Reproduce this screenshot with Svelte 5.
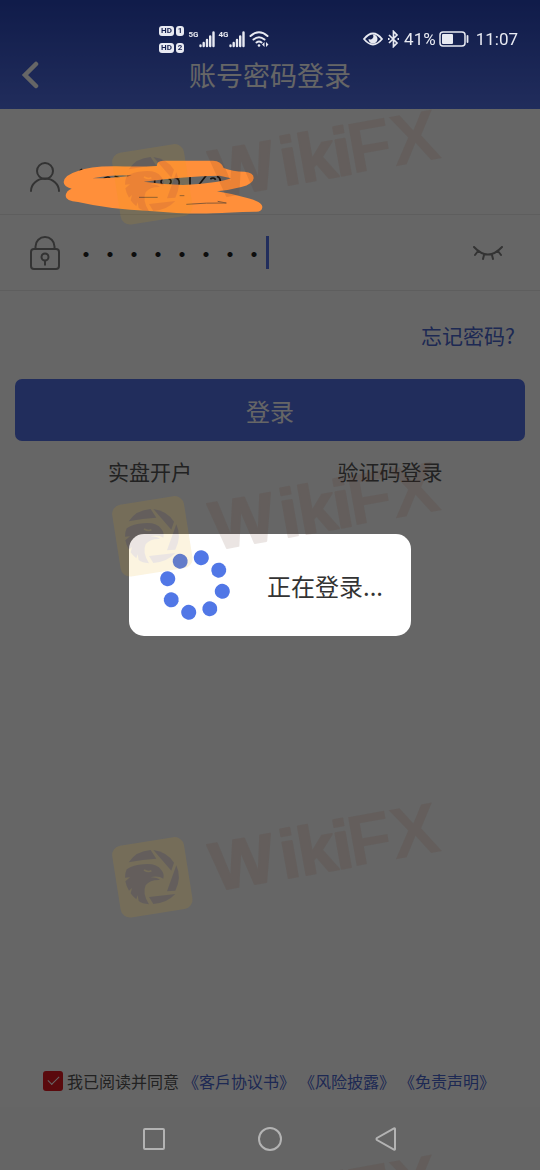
<script lang="ts">
  let account = $state('');
  let password = $state('abcd1234');
  let agreed = $state(true);

  const agreements = ['《客戶协议书》', '《风险披露》', '《免责声明》'];
  const spinnerDots = [-77, -32, 13, 58, 103, 148, 193, 238];
  const watermarks = [0, 1, 2, 3];
</script>

{#snippet signal(label: string)}
  <span class="signal">
    <span class="signal-label">{label}</span>
    <svg width="16" height="18" viewBox="0 0 16 18">
      <path d="M1.500 15.500v.5M4.700 13v3M8 10v6M11.200 6.500v9.500M14.500 2.500v13.500" stroke="currentColor" stroke-width="2.400" stroke-linecap="round" />
    </svg>
  </span>
{/snippet}

<div class="page">
  <header class="header">
    <div class="status-bar">
      <div class="status-left">
        <div class="sims">
          <span class="sim"><b>HD</b><b>1</b></span>
          <span class="sim"><b>HD</b><b>2</b></span>
        </div>
        {@render signal('5G')}
        {@render signal('4G')}
        <svg width="21" height="18" viewBox="0 0 21 18" fill="none" stroke="currentColor" stroke-width="2" stroke-linecap="round">
          <path d="M1.500 6q8.500-7.500 17 0M4.500 9.500q5.500-4.500 11 0M7.500 12.500q2.500-2 5 0" />
          <circle cx="10" cy="15.500" r="1.300" fill="currentColor" stroke="none" />
          <path d="M15.500 12l-2.500 2.500 2.500 2.500zM17 12l2.500 2.500-2.500 2.500z" fill="currentColor" stroke="none" />
        </svg>
      </div>
      <div class="status-right">
        <svg width="20" height="14" viewBox="0 0 20 14">
          <path d="M1 7Q10-4 19 7Q10 18 1 7Z" fill="none" stroke="currentColor" stroke-width="1.800" />
          <path d="M10 2.500a4.500 4.500 0 1 1-4.500 4.500q2.500 1 4-.5T10 2.500z" fill="currentColor" />
        </svg>
        <svg class="bluetooth" width="13" height="18" viewBox="0 0 13 18" fill="none" stroke="currentColor" stroke-width="1.700">
          <path d="M2 5l8 8-3.500 3.500V1.500L10 5l-8 8" />
          <path d="M1 9h1.500M10.500 9H12" stroke-width="2" />
        </svg>
        <span>41%</span>
        <svg class="battery" width="30" height="16" viewBox="0 0 30 16">
          <rect x="1" y="1" width="25" height="14" rx="3" fill="none" stroke="currentColor" stroke-width="1.500" />
          <rect x="3" y="3" width="11" height="10" rx="1" fill="currentColor" />
          <path d="M28.500 5v6" stroke="currentColor" stroke-width="1.800" stroke-linecap="round" />
        </svg>
        <time>11:07</time>
      </div>
    </div>

    <div class="title-bar">
      <button class="back" aria-label="返回">
        <svg width="18" height="28" viewBox="0 0 18 28" fill="none" stroke="currentColor" stroke-width="4.500">
          <path d="M15 3L4 14l11 11" stroke-linecap="round" />
        </svg>
      </button>
      <h1>账号密码登录</h1>
    </div>
  </header>

  <form class="form" onsubmit={(e) => e.preventDefault()}>
    <div class="field account">
      <label for="account" aria-label="账号">
        <svg width="30" height="32" viewBox="0 0 30 32" fill="none" stroke="currentColor" stroke-width="2">
          <circle cx="15" cy="9" r="8" />
          <path d="M1 29a14 12.500 0 0 1 28 0" stroke-linecap="round" />
        </svg>
      </label>
      <input id="account" type="text" bind:value={account} />
      <svg class="scribble" width="200" height="54" viewBox="190 150 600 162">
        <path
          d="M240 182l8-4M312 206q14-10 20 0M345 198l20 8M382 199l14-1M465 204v16M488 208q-8 6 0 16M506 205q14 6 4 18M524 202h16M528 204q14 4 10 20M571 196v30M620 196l-22 28M632 207q10-7 16 2M652 199q10 4 10 14"
          fill="none"
          stroke="#15110e"
          stroke-width="5"
        />
        <path
          fill="#ff8f3a"
          fill-rule="evenodd"
          d="M192 216Q194 195 235 183Q270 168 350 169Q420 171 472 168Q470 153 490 152H640Q665 153 672 174Q698 185 735 185Q763 187 762 205Q760 223 725 231Q690 240 652 244Q700 252 740 263Q789 275 788 292Q787 307 765 305Q690 307 640 310Q560 313 450 303Q330 298 235 276Q198 273 198 258Q199 242 216 236Q192 230 192 216ZM278 205Q320 206 396 197Q345 193 278 205ZM432 215Q560 198 660 197L694 205Q650 221 550 225Q490 223 432 215Z"
        />
        <path d="M418 262h56M540 257h14M560 283q60-5 120-4l-26-5" fill="none" stroke="#8a5a36" stroke-width="3" />
      </svg>
    </div>

    <div class="field">
      <label for="password" aria-label="密码">
        <svg width="30" height="34" viewBox="0 0 30 34" fill="none" stroke="currentColor" stroke-width="2">
          <rect x="1" y="13" width="28" height="20" rx="3" />
          <path d="M5.500 13V10.500a9.500 9.500 0 0 1 19 0V13" />
          <circle cx="15" cy="21" r="3.500" />
          <path d="M15 24.500v5" />
        </svg>
      </label>
      <input id="password" class="password" type="password" bind:value={password} />
      <span class="caret"></span>
      <button type="button" class="eye" aria-label="显示密码">
        <svg width="30" height="14" viewBox="0 0 30 14" fill="none" stroke="currentColor" stroke-width="2" stroke-linecap="round">
          <path d="M1 1Q15 16 29 1M5 5L2 9M11 9l-1 4M19 9l1 4M25 5l3 4" />
        </svg>
      </button>
    </div>

    <a class="forgot" href="#forgot">忘记密码?</a>
    <button class="submit" type="submit">登录</button>

    <nav class="options">
      <a href="#open">实盘开户</a>
      <a href="#code">验证码登录</a>
    </nav>
  </form>

  <div class="agreement">
    <input id="agree" type="checkbox" bind:checked={agreed} />
    <label for="agree">我已阅读并同意</label>
    {#each agreements as item}
      <a href="#terms">{item}</a>
    {/each}
  </div>

  <footer class="nav-bar">
    <button aria-label="最近任务">
      <svg width="24" height="24" viewBox="0 0 24 24"><rect x="2" y="2" width="20" height="20" rx="1" /></svg>
    </button>
    <button aria-label="主页">
      <svg width="24" height="24" viewBox="0 0 24 24"><circle cx="12" cy="12" r="11" /></svg>
    </button>
    <button aria-label="后退">
      <svg width="24" height="24" viewBox="0 0 24 24"><path d="M21 2v20q0 1-1 .5L3 13q-1-1 0-2L20 1.500q1-.5 1 .5z" /></svg>
    </button>
  </footer>

  <div class="mask">
    <div class="loading" role="dialog" aria-label="正在登录">
      <svg width="72" height="72" viewBox="-36 -36 72 72" fill="#5177e6">
        {#each spinnerDots as angle}
          <circle cx="28" cy="0" r="7.500" transform="rotate({angle})" />
        {/each}
      </svg>
      <span>正在登录...</span>
    </div>
  </div>

  <div class="watermarks" aria-hidden="true">
    {#each watermarks as mark (mark)}
      <svg width="360" height="130" viewBox="0 0 360 130">
        <g opacity="0.12">
          <g transform="translate(-5 -8) scale(.3333)">
            <rect x="48" y="153" width="218" height="218" rx="28" fill="#e1a500" transform="rotate(-9 157 262)" />
            <g fill="#582f1e">
              <path d="M86 217Q108 183 152 180L169 206Q130 208 86 217Z" />
              <path d="M160 180Q202 186 222 218L214 242Z" />
              <path d="M229 226Q246 262 226 302L201 304Z" />
              <path d="M226 312Q200 340 160 342L147 321Z" />
              <path d="M80 238Q100 224 130 223Q170 219 184 240Q194 252 190 266L180 261Q165 257 152 262Q172 263 180 270Q150 269 137 286Q126 310 147 343Q126 341 116 333L113 316L109 328Q98 320 92 310L96 294L87 302Q79 290 76 274L90 262L75 263Q75 248 80 238Z" />
            </g>
            <path d="M132 240q14 8 22 2" fill="none" stroke="#e1a500" stroke-width="5" />
          </g>
          <g class="brand" transform="translate(110 93) rotate(-10)">
            <text class="round" x="0" y="0">W</text>
            <text class="round" x="70" y="0">i</text>
            <text class="round" x="88" y="0">k</text>
            <text class="round" x="124" y="0">i</text>
            <text x="139" y="0">FX</text>
          </g>
        </g>
      </svg>
    {/each}
  </div>
</div>

<style>
  :global(body) {
    margin: 0;
    background: #fff;
  }

  .page {
    position: relative;
    display: flex;
    flex-direction: column;
    min-height: 100vh;
    font-family: "Noto Sans CJK SC", sans-serif;
    color: #333;
  }

  button {
    padding: 0;
    border: none;
    background: none;
    color: inherit;
    font: inherit;
    cursor: pointer;
  }

  a {
    color: #4a66d0;
    text-decoration: none;
  }

  svg {
    display: block;
    flex-shrink: 0;
  }

  /* header */
  .header {
    padding-bottom: 15px;
    background: linear-gradient(#2946b8, #5370e6);
    color: #fff;
  }

  .status-bar {
    position: relative;
    z-index: 2;
    display: flex;
    justify-content: space-between;
    align-items: center;
    box-sizing: border-box;
    height: 56px;
    padding: 22px 22px 0 159px;
    color: #e8eaf2;
    font-family: Roboto, sans-serif;
    font-size: 17px;
  }

  .status-left,
  .status-right,
  .signal {
    display: flex;
    align-items: center;
  }

  .status-left {
    gap: 4px;
  }

  .sims {
    display: flex;
    flex-direction: column;
    gap: 7px;
  }

  .sim {
    display: flex;
    gap: 2px;
  }

  .sim b {
    padding: 0 2px;
    border-radius: 3px;
    background: #e8eaf2;
    color: #15204e;
    font-size: 8px;
    line-height: 10px;
  }

  .signal-label {
    align-self: flex-start;
    font-size: 8px;
    font-weight: 700;
    line-height: 9px;
  }

  .bluetooth {
    margin: 0 4px;
  }

  .battery {
    margin: 0 7px 0 3px;
  }

  .title-bar {
    display: grid;
    grid-template-columns: 60px 1fr 60px;
    align-items: center;
    height: 38px;
    text-align: center;
  }

  .back {
    display: flex;
    padding-left: 21px;
  }

  h1 {
    margin: 0;
    font-size: 27px;
    font-weight: 400;
    line-height: 36px;
  }

  /* form */
  .form {
    display: flex;
    flex-direction: column;
    flex: 1;
  }

  .field {
    position: relative;
    display: flex;
    align-items: center;
    height: 75px;
    padding: 0 37px 0 30px;
    border-bottom: 1px solid #eaeaea;
  }

  .account {
    height: 73px;
    margin-top: 32px;
  }

  .field label {
    margin-right: 14px;
    color: #808080;
  }

  .field input {
    min-width: 0;
    padding: 0;
    border: none;
    outline: none;
    background: none;
    color: #222;
    font: inherit;
    font-size: 24px;
  }

  .account input {
    flex: 1;
  }

  .password {
    width: 192px;
  }

  .caret {
    width: 3px;
    height: 33px;
    background: #5370e6;
  }

  .eye {
    margin-left: auto;
    color: #808080;
  }

  .scribble {
    position: absolute;
    top: 19px;
    left: 63px;
    z-index: 2;
  }

  .forgot {
    align-self: flex-end;
    margin: 29px 25px;
    font-size: 21px;
    line-height: 30px;
  }

  .submit {
    height: 62px;
    margin: 0 15px;
    border-radius: 7px;
    background: #5370e6;
    color: #fff;
    font-size: 24px;
  }

  .options {
    display: grid;
    grid-template-columns: 1fr 1fr;
    padding: 15px 30px;
    font-size: 21px;
    line-height: 30px;
    text-align: center;
  }

  .options a {
    color: #555;
  }

  /* agreement */
  .agreement {
    display: flex;
    align-items: center;
    gap: 4px;
    padding: 0 43px 14px;
    font-size: 16px;
    line-height: 24px;
    white-space: nowrap;
  }

  .agreement label {
    color: #555;
  }

  .agreement input {
    display: grid;
    place-items: center;
    width: 20px;
    height: 20px;
    margin: 0;
    border-radius: 3px;
    background: #ddd;
    appearance: none;
  }

  .agreement input:checked {
    background: #e01a22;
  }

  .agreement input:checked::after {
    content: "";
    width: 10px;
    height: 5px;
    margin-bottom: 4px;
    border: solid #fff;
    border-width: 0 0 1px 1px;
    transform: rotate(-45deg);
  }

  .nav-bar {
    display: flex;
    justify-content: center;
    align-items: center;
    gap: 92px;
    height: 63px;
    background: #fcfcfc;
  }

  .nav-bar button {
    position: relative;
    z-index: 2;
    color: #b3b3b3;
  }

  .nav-bar svg {
    fill: none;
    stroke: currentColor;
    stroke-width: 2;
  }

  /* loading */
  .mask {
    position: fixed;
    inset: 0;
    z-index: 1;
    display: flex;
    justify-content: center;
    align-items: center;
    background: rgba(0, 0, 0, 0.6);
  }

  .loading {
    display: flex;
    align-items: center;
    gap: 36px;
    padding: 15px 28px 15px 30px;
    border-radius: 15px;
    background: #fff;
    font-size: 24px;
  }

  /* watermark */
  .watermarks {
    position: absolute;
    inset: 0;
    z-index: 3;
    display: grid;
    grid-auto-rows: 352px 341px;
    padding: 105px 0 0 105px;
    overflow: hidden;
    pointer-events: none;
  }

  .watermarks svg {
    overflow: visible;
  }

  .brand {
    fill: #582f1e;
    font-family: "Liberation Sans", sans-serif;
    font-size: 72px;
    font-weight: 700;
  }

  .round {
    font-size: 68px;
    stroke: #582f1e;
    stroke-width: 2px;
    stroke-linejoin: round;
  }
</style>
